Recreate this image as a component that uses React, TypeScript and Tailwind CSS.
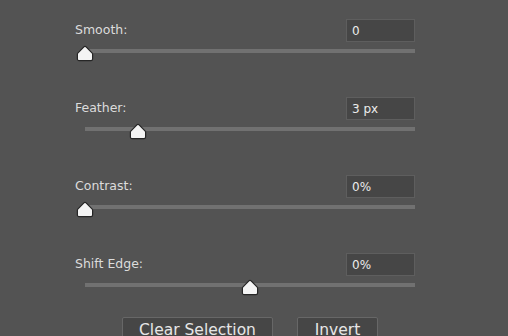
import React from "react";

const Thumb = ({ pct }: { pct: number }) => (
  <div className="absolute top-[-1px] w-[18px] h-[17px]" style={{ left: `calc(${pct}% - 9px)` }}>
    <svg width="18" height="17" viewBox="0 0 18 17">
      <path
        d="M9 1.3 C9.4 1.3 9.8 1.5 10.1 1.9 L16.2 8.1 C16.5 8.4 16.6 8.8 16.6 9.2 L16.6 14 C16.6 14.9 15.9 15.6 15 15.6 L3 15.6 C2.1 15.6 1.4 14.9 1.4 14 L1.4 9.2 C1.4 8.8 1.5 8.4 1.8 8.1 L7.9 1.9 C8.2 1.5 8.6 1.3 9 1.3 Z"
        fill="#f4f4f4"
        stroke="#262626"
        strokeWidth="1.2"
      />
    </svg>
  </div>
);

const Row = ({ label, value, pct, last }: { label: string; value: string; pct: number; last?: boolean }) => (
  <div className={last ? "" : "mb-[36px]"}>
    <div className="flex items-center justify-between h-[23px]">
      <span className="text-[12.5px] text-[#dcdcdc] leading-none">{label}</span>
      <div className="w-[69px] h-[23px] bg-[#464646] border border-[#5e5e5e] flex items-center pl-[5px] text-[12px] text-[#ececec] leading-none">
        {value}
      </div>
    </div>
    <div className="relative h-[15px] mt-[4px] ml-[10px]">
      <div className="absolute left-0 right-0 top-[3px] h-[4px] bg-[#717171]" />
      <Thumb pct={pct} />
    </div>
  </div>
);

export default function App() {
  return (
    <div
      className="w-[508px] h-[336px] bg-[#535353] overflow-hidden pl-[75px] pr-[93px] pt-[19px]"
      style={{ fontFamily: '"DejaVu Sans", Verdana, sans-serif' }}
    >
      <Row label="Smooth:" value="0" pct={0} />
      <Row label="Feather:" value="3 px" pct={16.2} />
      <Row label="Contrast:" value="0%" pct={0} />
      <Row label="Shift Edge:" value="0%" pct={50} last />
      <div className="flex gap-[24px] pl-[47px] mt-[22px]">
        <div className="w-[151px] h-[30px] bg-[#464646] border border-[#676767] rounded-[2px] flex justify-center pt-[5px] text-[15.5px] text-[#e6e6e6] leading-none">
          Clear Selection
        </div>
        <div className="w-[81px] h-[30px] bg-[#464646] border border-[#676767] rounded-[2px] flex justify-center pt-[5px] text-[15.5px] text-[#e6e6e6] leading-none">
          Invert
        </div>
      </div>
    </div>
  );
}
